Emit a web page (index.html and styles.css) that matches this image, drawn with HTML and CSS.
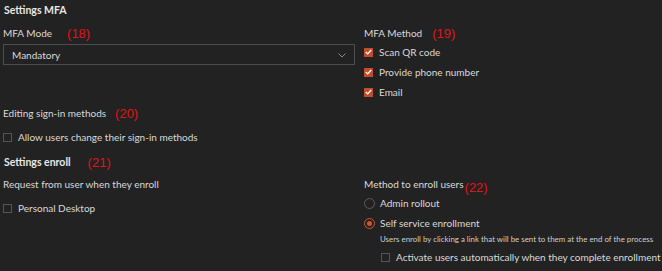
FILE: index.html
```html
<!DOCTYPE html>
<html>
<head>
<meta charset="utf-8">
<link rel="stylesheet" href="styles.css">
</head>
<body>
<div class="page">
  <div class="title">Settings MFA</div>
  <div class="cols top">
    <div class="col left">
      <div class="label">MFA Mode<span class="ann a18">(18)</span></div>
      <div class="select">
        <span>Mandatory</span>
        <svg class="chev" width="8" height="5" viewBox="0 0 8 5"><path d="M0.5 0.5 L4 4 L7.5 0.5" fill="none" stroke="#8a8a8a" stroke-width="1"/></svg>
      </div>
    </div>
    <div class="col right">
      <div class="label">MFA Method<span class="ann a19">(19)</span></div>
      <div class="row"><span class="cb on"><svg width="7" height="6" viewBox="0 0 7 6"><path d="M0.8 3 L2.7 4.9 L6.2 1" fill="none" stroke="#fff" stroke-width="1.3"/></svg></span>Scan QR code</div>
      <div class="row"><span class="cb on"><svg width="7" height="6" viewBox="0 0 7 6"><path d="M0.8 3 L2.7 4.9 L6.2 1" fill="none" stroke="#fff" stroke-width="1.3"/></svg></span>Provide phone number</div>
      <div class="row"><span class="cb on"><svg width="7" height="6" viewBox="0 0 7 6"><path d="M0.8 3 L2.7 4.9 L6.2 1" fill="none" stroke="#fff" stroke-width="1.3"/></svg></span>Email</div>
    </div>
  </div>
  <div class="label edit">Editing sign-in methods<span class="ann a20">(20)</span></div>
  <div class="row allow"><span class="cb"></span>Allow users change their sign-in methods</div>
  <div class="title enroll">Settings enroll<span class="ann a21">(21)</span></div>
  <div class="cols bottom">
    <div class="col left">
      <div class="label">Request from user when they enroll</div>
      <div class="row pd"><span class="cb"></span>Personal Desktop</div>
    </div>
    <div class="col right">
      <div class="label">Method to enroll users<span class="ann a22">(22)</span></div>
      <div class="row"><span class="radio"></span>Admin rollout</div>
      <div class="row"><span class="radio on"></span>Self service enrollment</div>
      <div class="desc">Users enroll by clicking a link that will be sent to them at the end of the process</div>
      <div class="row sub"><span class="cb"></span>Activate users automatically when they complete enrollment</div>
    </div>
  </div>
</div>
</body>
</html>
```

FILE: styles.css
```css
html, body {
  margin: 0;
  padding: 0;
  background: #222222;
}
.page {
  width: 662px;
  height: 271px;
  padding: 0 0 0 3px;
  box-sizing: border-box;
  font-family: "Lato", "Open Sans", sans-serif;
  color: #dadada;
  font-size: 10px;
  overflow: hidden;
}
.title {
  font-size: 10.5px;
  font-weight: 700;
  color: #e8e8e8;
  line-height: 20px;
  height: 20px;
  white-space: nowrap;
  padding-left: 1px;
}
.cols {
  display: flex;
  gap: 9px;
}
.col.left {
  width: 352px;
  flex: none;
}
.col.right {
  flex: 1;
  min-width: 0;
}
.label {
  line-height: 14px;
  height: 14px;
  white-space: nowrap;
}
.top {
  margin-top: 6px;
  height: 76px;
}
.select {
  margin-top: 4px;
  height: 21px;
  box-sizing: border-box;
  border: 1px solid #4d4d4d;
  background: #222222;
  display: flex;
  align-items: center;
  justify-content: space-between;
  padding: 0 8px 0 8px;
}
.select .chev {
  margin-top: 1px;
}
.top .right .label {
  margin-bottom: 2px;
}
.row {
  display: flex;
  align-items: center;
  height: 20px;
  white-space: nowrap;
}
.cb {
  width: 9px;
  height: 9px;
  box-sizing: border-box;
  border: 1px solid #555555;
  margin-right: 6px;
  display: inline-flex;
  align-items: center;
  justify-content: center;
  flex: none;
}
.cb.on {
  background: #c24d2c;
  border-color: #c24d2c;
}
.radio {
  width: 11px;
  height: 11px;
  box-sizing: border-box;
  border: 1px solid #5c5c5c;
  border-radius: 50%;
  margin-right: 5px;
  flex: none;
  position: relative;
}
.radio.on {
  border-color: #d0562f;
}
.radio.on::after {
  content: "";
  position: absolute;
  left: 2px;
  top: 2px;
  width: 5px;
  height: 5px;
  border-radius: 50%;
  background: #d0562f;
}
.edit {
  margin-top: 4px;
}
.allow {
  margin-top: 7px;
}
.enroll {
  margin-top: 5px;
}
.bottom {
  margin-top: 5px;
}
.pd {
  margin-top: 7px;
}
.bottom .right .label {
  margin-bottom: 2px;
}
.desc {
  font-size: 7.9px;
  line-height: 12px;
  height: 12px;
  padding-left: 16px;
  color: #cfcfcf;
  white-space: nowrap;
}
.row.sub {
  margin-top: 2px;
  padding-left: 17px;
}
.ann {
  font-family: "Liberation Sans", sans-serif;
  font-weight: normal;
  color: #e0141a;
  font-size: 13px;
  vertical-align: middle;
}
.a18 { margin-left: 15px; }
.a19 { margin-left: 10px; }
.a20 { margin-left: 9px; }
.a21 { margin-left: 17px; }
.a22 { margin-left: 1px; position: relative; top: 3px; }
```
